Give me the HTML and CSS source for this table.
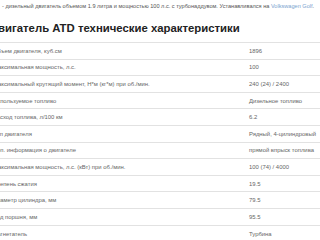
FILE: index.html
```html
<!DOCTYPE html>
<html lang="ru">
<head>
<meta charset="utf-8">
<link rel="stylesheet" href="styles.css">
</head>
<body>
<div class="page">
  <p class="intro">- дизельный двигатель объемом 1.9 литра и мощностью 100 л.с. с турбонаддувом. Устанавливался на <a href="#">Volkswagen Golf</a>.</p>
  <h1 class="title">Двигатель ATD технические характеристики</h1>
  <table class="specs">
    <tr><td>Объем двигателя, куб.см</td><td>1896</td></tr>
    <tr><td>Максимальная мощность, л.с.</td><td>100</td></tr>
    <tr><td>Максимальный крутящий момент, Н*м (кг*м) при об./мин.</td><td>240 (24) / 2400</td></tr>
    <tr><td>Используемое топливо</td><td>Дизельное топливо</td></tr>
    <tr><td>Расход топлива, л/100 км</td><td>6.2</td></tr>
    <tr><td>Тип двигателя</td><td>Рядный, 4-цилиндровый</td></tr>
    <tr><td>Доп. информация о двигателе</td><td>прямой впрыск топлива</td></tr>
    <tr><td>Максимальная мощность, л.с. (кВт) при об./мин.</td><td>100 (74) / 4000</td></tr>
    <tr><td>Степень сжатия</td><td>19.5</td></tr>
    <tr><td>Диаметр цилиндра, мм</td><td>79.5</td></tr>
    <tr><td>Ход поршня, мм</td><td>95.5</td></tr>
    <tr><td>Нагнетатель</td><td>Турбина</td></tr>
  </table>
</div>
</body>
</html>
```
FILE: styles.css
```css
html, body {
  margin: 0;
  padding: 0;
  background: #fff;
}
body {
  width: 320px;
  height: 240px;
  overflow: hidden;
  font-family: "Liberation Sans", Arial, sans-serif;
}
.page {
  margin-left: -9px;
  width: 340px;
}
.intro {
  margin: 0;
  padding: 3px 0 0 11px;
  font-size: 5.6px;
  line-height: 7px;
  color: #555;
  white-space: nowrap;
}
.intro a {
  color: #7aa3cf;
  text-decoration: none;
}
.title {
  margin: 11px 0 0 -1px;
  font-size: 11.35px;
  line-height: 14px;
  font-weight: bold;
  color: #222;
  white-space: nowrap;
}
.specs {
  margin-top: 7px;
  width: 100%;
  border-collapse: collapse;
  font-size: 5.9px;
  color: #666;
}
.specs tr {
  height: 16.6px;
  border-top: 1px solid #e2e2e2;
}
.specs td {
  padding: 0 0 0 8px;
  white-space: nowrap;
  vertical-align: middle;
}
.specs td:first-child {
  padding-left: 2px;
  width: 248px;
}
```
